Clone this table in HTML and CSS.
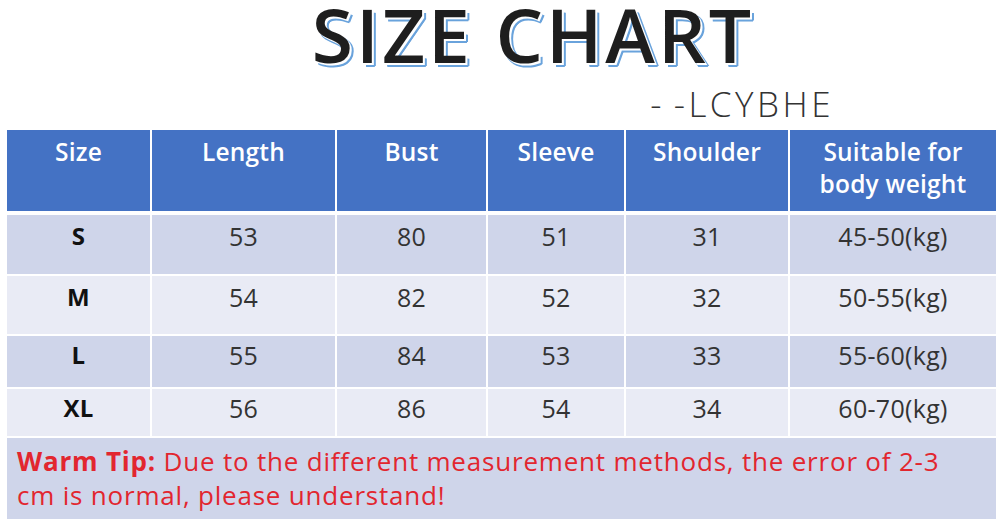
FILE: index.html
```html
<!DOCTYPE html>
<html>
<head>
<meta charset="utf-8">
<link rel="stylesheet" href="styles.css">
</head>
<body>
<div class="page">
  <header class="head">
    <h1 class="title">SIZE CHART</h1>
    <div class="brand">- -LCYBHE</div>
  </header>
  <div class="chart">
    <div class="row hrow">
      <div class="c">Size</div>
      <div class="c">Length</div>
      <div class="c">Bust</div>
      <div class="c">Sleeve</div>
      <div class="c">Shoulder</div>
      <div class="c">Suitable for<br>body weight</div>
    </div>
    <div class="row odd r1">
      <div class="c sz">S</div><div class="c">53</div><div class="c">80</div><div class="c">51</div><div class="c">31</div><div class="c">45-50(kg)</div>
    </div>
    <div class="row even r2">
      <div class="c sz">M</div><div class="c">54</div><div class="c">82</div><div class="c">52</div><div class="c">32</div><div class="c">50-55(kg)</div>
    </div>
    <div class="row odd r3">
      <div class="c sz">L</div><div class="c">55</div><div class="c">84</div><div class="c">53</div><div class="c">33</div><div class="c">55-60(kg)</div>
    </div>
    <div class="row even r4">
      <div class="c sz">XL</div><div class="c">56</div><div class="c">86</div><div class="c">54</div><div class="c">34</div><div class="c">60-70(kg)</div>
    </div>
    <div class="tip"><b>Warm Tip:</b> Due to the different measurement methods, the error of 2-3<br>cm is normal, please understand!</div>
  </div>
</div>
</body>
</html>
```
FILE: styles.css
```css
* { box-sizing: border-box; }
html, body { margin: 0; padding: 0; background: #fff; }
body { font-family: "Open Sans", "Liberation Sans", sans-serif; width: 1000px; height: 524px; overflow: hidden; }
.page { display: flex; flex-direction: column; }
.head { height: 130px; display: flex; flex-direction: column; }
.title {
  margin: 0;
  padding-left: 66px;
  padding-top: 0;
  text-align: center;
  font-family: "Open Sans", "Liberation Sans", sans-serif;
  font-weight: 600;
  font-size: 75px;
  line-height: 68px;
  letter-spacing: 3px;
  color: #1e1e1e;
  text-shadow: 2px 2px 0 #fff, 3px 3px 0 #6aa3dc, 4px 3px 0 #6aa3dc, 3px 4px 0 #6aa3dc;
}
.brand {
  align-self: flex-end;
  margin-right: 166px;
  margin-top: 16px;
  font-family: "Open Sans", sans-serif;
  font-weight: 300;
  font-size: 35px;
  line-height: 40px;
  letter-spacing: 3.5px;
  word-spacing: -4px;
  color: #333;
}
.chart { margin-left: 7px; width: 989px; display: flex; flex-direction: column; gap: 2px; }
.row { display: grid; grid-template-columns: 143px 183px 149px 136px 162px 1fr; column-gap: 2px; }
.c { text-align: center; font-size: 25px; color: #333; padding-top: 4px; line-height: 30px; letter-spacing: 0.3px; }
.hrow { height: 81px; margin-bottom: 2px; }
.hrow .c { background: #4472c4; color: #fff; font-weight: 600; font-size: 24.5px; line-height: 32px; padding-top: 6px; letter-spacing: 0.2px; }
.odd .c { background: #cfd5ea; }
.even .c { background: #e9ebf5; }
.sz { font-weight: 700; color: #111 !important; font-size: 24px; }
.r1 { height: 59px; }
.r2 { height: 58px; }
.r3 { height: 51px; }
.r4 { height: 47px; }
.r1 .c, .r2 .c { padding-top: 6px; }
.tip {
  height: 81px;
  background: #cfd5ea;
  color: #e2262f;
  font-size: 26px;
  letter-spacing: 0.8px;
  line-height: 34px;
  padding: 6px 0 0 10px;
}
.tip b { font-weight: 700; }
```
